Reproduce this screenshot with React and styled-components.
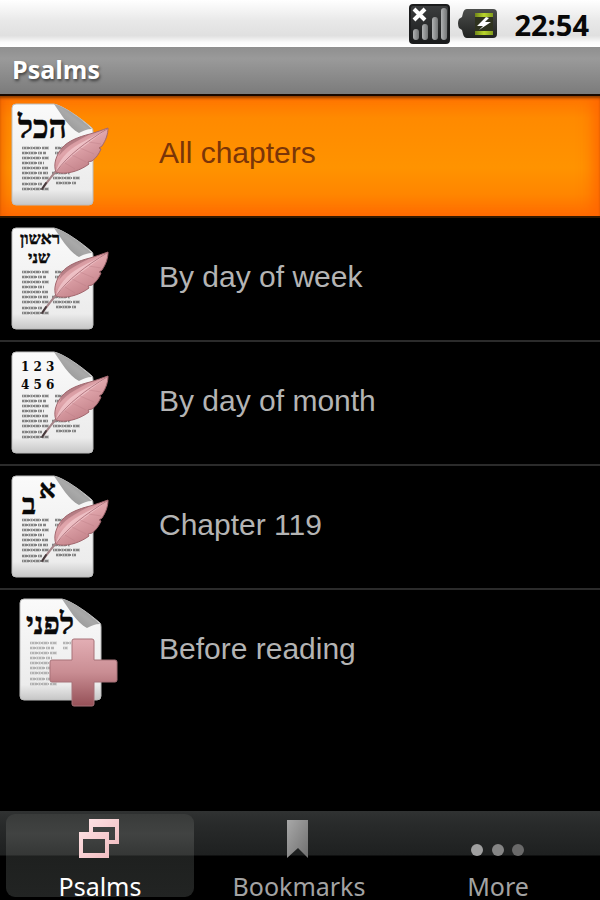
import React from "react";
import styled, { createGlobalStyle } from "styled-components";

const GlobalStyle = createGlobalStyle`
  *, *::before, *::after { box-sizing: border-box; }
  body { margin: 0; background: #000; }
  button { font: inherit; border: 0; margin: 0; cursor: pointer; }
`;

const Screen = styled.div`
  display: flex;
  flex-direction: column;
  min-height: 100vh;
  background: #000;
  font-family: "Liberation Sans", Arial, sans-serif;
`;

const StatusBar = styled.header`
  display: flex;
  align-items: center;
  justify-content: flex-end;
  gap: 8px;
  height: 47px;
  padding: 0 11px 0 0;
  background: linear-gradient(#fff 0%, #f8f8f8 14%, #e8e8e8 45%, #e0e0e0 76%, #fafafa 90%, #fff 100%);
`;

const Clock = styled.time`
  margin-left: 8px;
  padding-top: 2px;
  color: #080808;
  font: 700 29px/44px "Open Sans", "Noto Sans", sans-serif;
`;

const TitleBar = styled.h1`
  height: 47px;
  margin: 0;
  padding: 0 12px;
  color: #fff;
  background: linear-gradient(#8f8f8f, #9a9a9a 25%, #7b7b7b);
  font: 700 25px/45px "Open Sans", "Noto Sans", sans-serif;
  text-shadow: 1px 2px 3px rgba(0, 0, 0, 0.55);
`;

const List = styled.ul`
  flex: 1;
  margin: 0;
  padding: 0;
  list-style: none;
`;

const Item = styled.li`
  border-bottom: 2px solid #2b2b2b;
  &:first-child { border-bottom-color: #301800; }
  &:last-child { border-bottom-color: transparent; }
`;

const RowButton = styled.button`
  display: flex;
  align-items: center;
  gap: 39px;
  width: 100%;
  height: 122px;
  padding: 0;
  text-align: left;
  font-size: 30px;
  line-height: 36px;
  color: ${(p) => (p.$selected ? "#7a3508" : "#b4b4b4")};
  background: ${(p) => (p.$selected ? "linear-gradient(#ff7000 0, #ff7800 7px, #ff8a00 24px, #ff9300 60%, #ff8600 82%, #ff6c00 100%)" : "#000")};
  box-shadow: ${(p) => (p.$selected ? "inset 0 2px 0 #180800, inset 0 5px 3px -1px #8a3c00, inset -14px 0 16px -8px #ff6400, inset 10px 0 12px -8px #f06000" : "none")};
`;

const RowLabel = styled.span`
  padding-bottom: 4px;
`;

const TabBar = styled.nav`
  display: grid;
  grid-template-columns: repeat(3, 1fr);
  gap: 11px;
  height: 89px;
  padding: 3px 8px 3px 6px;
  background: linear-gradient(#303232 0, #292b2b 12px, #1e2020 44px, #000 45px);
`;

const TabButton = styled.button`
  display: flex;
  flex-direction: column;
  align-items: center;
  justify-content: space-between;
  padding: 4px 0 0;
  border-radius: 9px;
  color: ${(p) => (p.$active ? "#fff" : "#a3a3a3")};
  background: ${(p) => (p.$active ? "linear-gradient(#393b3a 0, #414342 20px, #353736 41px, #1e201f 42px, #222423 100%)" : "transparent")};
`;

const TabLabel = styled.span`
  font: 400 25px/22px "Noto Sans", "Open Sans", sans-serif;
`;

const SignalIcon = () => (
  <svg width="41" height="40" viewBox="0 0 41 40" aria-hidden="true">
    <defs>
      <linearGradient id="signalBox" x2="0" y2="1">
        <stop stopColor="#3d3f40" />
        <stop offset="1" stopColor="#191a1b" />
      </linearGradient>
      <linearGradient id="signalBar">
        <stop stopColor="#b0b2b3" />
        <stop offset="1" stopColor="#737576" />
      </linearGradient>
    </defs>
    <rect x="1" y="1" width="39" height="38" rx="3" fill="url(#signalBox)" stroke="#1b1c1d" strokeWidth="2" />
    <g fill="url(#signalBar)">
      <rect x="4" y="25" width="6" height="11" rx="3" />
      <rect x="13" y="20" width="6" height="16" rx="3" />
      <rect x="23" y="13" width="6" height="23" rx="3" />
      <rect x="32" y="4" width="6" height="32" rx="3" />
    </g>
    <path d="M5 5 L16 16 M16 5 L5 16" stroke="#fff" strokeWidth="4" />
  </svg>
);

const BatteryIcon = () => (
  <svg width="40" height="30" viewBox="0 0 40 30" aria-hidden="true">
    <defs>
      <linearGradient id="batteryBody" x2="0" y2="1">
        <stop stopColor="#4c4e4c" />
        <stop offset="1" stopColor="#202220" />
      </linearGradient>
      <linearGradient id="batteryCharge">
        <stop stopColor="#708619" />
        <stop offset=".5" stopColor="#b9d52c" />
        <stop offset="1" stopColor="#829c1c" />
      </linearGradient>
    </defs>
    <path d="M9 0 H35 Q39 0 39 4 V25 Q39 29 35 29 H9 Q6 29 5 25 L4 21 L1 19 Q-1 14 1 10 L4 8 L5 4 Q6 0 9 0Z" fill="url(#batteryBody)" />
    <rect x="17" y="4" width="18" height="22" fill="#2f331f" />
    <path d="M17 4 H35 V8 H17Z M17 22 H35 V26 H17Z" fill="url(#batteryCharge)" />
    <path d="M28 8 L19 17 H25 L21 21 L33 13 H27 L31 9Z" fill="#fff" />
  </svg>
);

const GLYPHS = {
  all: [{ x: 18, y: 44, size: 32, text: "הכל" }],
  week: [
    { x: 20, y: 26, size: 17, text: "ראשון" },
    { x: 28, y: 45, size: 17, text: "שני" },
  ],
  month: [
    { x: 21, y: 29, size: 12, text: "1 2 3", latin: true },
    { x: 21, y: 47, size: 12, text: "4 5 6", latin: true },
  ],
  chapter: [
    { x: 39, y: 32, size: 26, text: "א" },
    { x: 22, y: 48, size: 29, text: "ב" },
  ],
  before: [{ x: 18, y: 45, size: 30, text: "לפני" }],
};

const LINES = [
  [22, 54, 49], [22, 59, 46], [22, 64, 49], [22, 69, 44], [22, 74, 48],
  [22, 79, 49], [22, 84, 49], [22, 90, 42], [22, 95, 49],
  [55, 54, 63], [55, 59, 60], [52, 79, 70], [53, 84, 80], [56, 89, 76],
];

const IconText = styled.text`
  font-family: ${(p) => (p.$latin ? '"DejaVu Serif", serif' : '"Liberation Serif", "Times New Roman", serif')};
  font-weight: 700;
  direction: ltr;
  fill: #080808;
  stroke: #080808;
  stroke-width: ${(p) => (p.$latin ? 0 : 0.5)};
`;

const Feather = () => (
  <g>
    <path d="M57 76 C51 83 47 88 43 94" fill="none" stroke="#a5868a" strokeWidth="2" strokeLinecap="round" />
    <path d="M46 89 L42 95" stroke="#45393b" strokeWidth="2" strokeLinecap="round" />
    <path d="M56 78 C53 71 56 61 62 54 C68 47 78 43 90 40 C97 38 102 36 108 34 C108 40 106 46 102 52 L99 54 L101 55 C99 60 96 64 92 67 L88 68 L89 70 C81 76 70 80 60 79Z" fill="url(#featherFill)" stroke="#a2686f" strokeWidth="1" />
    <path d="M56 78 C58 67 67 57 79 50 C88 45 99 40 107 35 C94 46 73 58 56 78Z" fill="#f4ccd0" opacity=".7" />
    <path d="M62 54 C68 47 78 43 90 40 C80 46 68 50 59 62Z" fill="#96616a" opacity=".5" />
    <path d="M56 78 C68 61 86 48 107 35" fill="none" stroke="#b47881" strokeWidth="1" />
    <path d="M65 69 L75 75 M72 61 L86 68 M80 54 L94 60 M89 48 L101 50" stroke="#bd7e87" strokeWidth="1" opacity=".4" />
  </g>
);

const Plus = () => (
  <path d="M74 49 H92 Q94 49 94 51 V70 H115 Q117 70 117 72 V90 Q117 92 115 92 H94 V114 Q94 116 92 116 H74 Q72 116 72 114 V92 H52 Q50 92 50 90 V72 Q50 70 52 70 H72 V51 Q72 49 74 49Z" fill="url(#plusFill)" stroke="#a77278" strokeWidth="1" />
);

const PageIcon = ({ kind }) => {
  const before = kind === "before";
  return (
    <svg width="120" height="122" viewBox="0 0 120 122" aria-hidden="true">
      <g transform={before ? "translate(8 -1)" : undefined}>
        <path d="M16 10 H54 C64 12 83 26 92 34 Q93 35 93 38 V107 Q93 111 89 111 H16 Q12 111 12 107 V14 Q12 10 16 10Z" fill="url(#paperFill)" stroke="#bdbdbd" strokeWidth="1" />
        <g stroke="#6a6a6a" fill="none" opacity={before ? 0.45 : 0.8}>
          {LINES.map(([x, y, end], i) => (
            <g key={i}>
              <path d={`M${x} ${y} H${end}`} strokeWidth="3" strokeDasharray={i % 2 ? "5 1 8 2 4 1" : "7 1 3 1 6 2"} opacity=".5" />
              <path d={`M${x} ${y} H${end}`} strokeWidth="2" strokeDasharray={i % 2 ? "2 1 3 1 1 1" : "1 1 2 1 3 1"} />
            </g>
          ))}
        </g>
        <path d="M54 10 C61 20 69 34 79 39 C83 37 87 35 92 35 C84 27 66 13 54 10Z" fill="url(#foldFill)" />
        {GLYPHS[kind].map((g) => (
          <IconText key={g.text} x={g.x} y={g.y} fontSize={g.size} $latin={g.latin}>{g.text}</IconText>
        ))}
      </g>
      {before ? <Plus /> : <Feather />}
    </svg>
  );
};

const SharedPaints = () => (
  <svg width="0" height="0" aria-hidden="true" display="block">
    <defs>
      <linearGradient id="paperFill" x2="0" y2="1">
        <stop stopColor="#fafafa" />
        <stop offset=".85" stopColor="#ececec" />
        <stop offset="1" stopColor="#c6c6c6" />
      </linearGradient>
      <linearGradient id="foldFill" x1="1" y1="0" x2="0" y2="1">
        <stop stopColor="#838383" />
        <stop offset=".5" stopColor="#a9a9a9" />
        <stop offset="1" stopColor="#8a8a8a" />
      </linearGradient>
      <linearGradient id="featherFill" x1="0.2" y1="0" x2="0.8" y2="1">
        <stop stopColor="#b9777f" />
        <stop offset=".4" stopColor="#e0a5ab" />
        <stop offset="1" stopColor="#b9767e" />
      </linearGradient>
      <linearGradient id="plusFill" x2="0" y2="1">
        <stop stopColor="#e3aeb4" />
        <stop offset=".5" stopColor="#c98d93" />
        <stop offset="1" stopColor="#955057" />
      </linearGradient>
    </defs>
  </svg>
);

const StackIcon = () => (
  <svg width="42" height="40" viewBox="0 0 42 40" aria-hidden="true">
    <defs>
      <linearGradient id="stackFill" x2="1" y2="1">
        <stop stopColor="#ffe6e8" />
        <stop offset="1" stopColor="#efb8bc" />
      </linearGradient>
    </defs>
    <path fillRule="evenodd" d="M10 1 H40 V26 H30 V22 H36 V9 H14 V14 H10Z M0 14 H30 V40 H0Z M4 21 V35 H26 V21Z" fill="url(#stackFill)" />
  </svg>
);

const BookmarkIcon = () => (
  <svg width="42" height="40" viewBox="0 0 42 40" aria-hidden="true">
    <defs>
      <linearGradient id="bookmarkFill" x2="1" y2="1">
        <stop stopColor="#a8a8a8" />
        <stop offset="1" stopColor="#707070" />
      </linearGradient>
    </defs>
    <path d="M9 2 H30 V40 L20 30 L9 40Z" fill="url(#bookmarkFill)" />
  </svg>
);

const MoreIcon = () => (
  <svg width="54" height="40" viewBox="0 0 54 40" aria-hidden="true">
    <circle cx="6" cy="32" r="6" fill="#a0a0a0" />
    <circle cx="27" cy="32" r="6" fill="#858585" />
    <circle cx="47" cy="32" r="6" fill="#696969" />
  </svg>
);

const ROWS = [
  { kind: "all", label: "All chapters" },
  { kind: "week", label: "By day of week" },
  { kind: "month", label: "By day of month" },
  { kind: "chapter", label: "Chapter 119" },
  { kind: "before", label: "Before reading" },
];

const TABS = [
  { label: "Psalms", Icon: StackIcon },
  { label: "Bookmarks", Icon: BookmarkIcon },
  { label: "More", Icon: MoreIcon },
];

export default function App() {
  return (
    <Screen>
      <GlobalStyle />
      <StatusBar>
        <SignalIcon />
        <BatteryIcon />
        <Clock>22:54</Clock>
      </StatusBar>
      <TitleBar>Psalms</TitleBar>
      <SharedPaints />
      <List>
        {ROWS.map(({ kind, label }, i) => (
          <Item key={kind}>
            <RowButton type="button" $selected={i === 0}>
              <PageIcon kind={kind} />
              <RowLabel>{label}</RowLabel>
            </RowButton>
          </Item>
        ))}
      </List>
      <TabBar>
        {TABS.map(({ label, Icon }, i) => (
          <TabButton key={label} type="button" $active={i === 0} aria-current={i === 0 ? "page" : undefined}>
            <Icon />
            <TabLabel>{label}</TabLabel>
          </TabButton>
        ))}
      </TabBar>
    </Screen>
  );
}
